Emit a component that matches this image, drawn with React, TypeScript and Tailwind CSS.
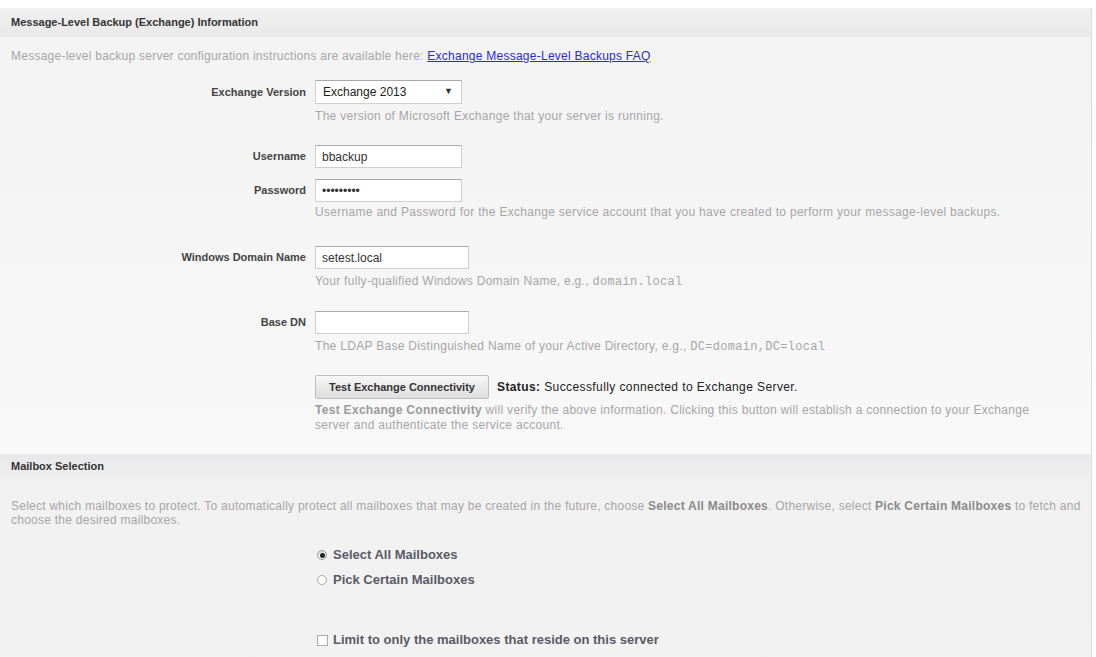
import React from "react";

const Label: React.FC<{ children: React.ReactNode }> = ({ children }) => (
  <div className="w-[315px] shrink-0 text-right font-bold text-[11px] text-[#444] pr-[9px]">
    {children}
  </div>
);

const Help: React.FC<{ children: React.ReactNode; className?: string }> = ({ children, className }) => (
  <div className={"ml-[315px] text-[12px] tracking-[0.3px] leading-[15px] text-[#a6a6a6] " + (className || "")}>
    {children}
  </div>
);

const TextInput: React.FC<{ value?: string; width: string }> = ({ value, width }) => (
  <div
    className={
      "h-[23px] bg-white border border-[#cfcfcf] border-t-[#aaa] flex items-center px-[6px] text-[12px] text-[#333] " +
      width
    }
  >
    {value}
  </div>
);

const mono = { fontFamily: '"Liberation Mono", "Courier New", monospace' };

const App: React.FC = () => {
  return (
    <div
      className="w-full h-[657px] bg-white pt-[8px] overflow-hidden"
      style={{ fontFamily: '"Liberation Sans", Arial, sans-serif' }}
    >
      <div className="mr-[4px] border-r border-[#dcdcdc] h-full bg-[#f4f4f4]">
        {/* section 1 header */}
        <div className="h-[29px] px-[11px] flex items-center bg-gradient-to-b from-[#f0f0f0] to-[#e9e9e9] font-bold text-[11px] text-[#333]">
          Message-Level Backup (Exchange) Information
        </div>

        <div className="bg-gradient-to-b from-[#f3f3f3] to-[#f8f8f8] pb-[21px]">
          <div className="px-[11px] pt-[12px] text-[12px] tracking-[0.25px] leading-[15px] text-[#a6a6a6]">
            Message-level backup server configuration instructions are available here:{" "}
            <span className="text-[#2a2ad0] underline">Exchange Message-Level Backups FAQ</span>
          </div>

          {/* exchange version */}
          <div className="flex items-center mt-[16px]">
            <Label>Exchange Version</Label>
            <div className="w-[147px] h-[24px] bg-white border border-[#cfcfcf] border-t-[#aaa] flex items-center justify-between pl-[7px] pr-[8px] text-[12px] text-[#222]">
              <span>Exchange 2013</span>
              <span className="text-[9px] text-[#333]">▼</span>
            </div>
          </div>
          <Help className="mt-[5px]">The version of Microsoft Exchange that your server is running.</Help>

          {/* username */}
          <div className="flex items-center mt-[21px]">
            <Label>Username</Label>
            <TextInput value="bbackup" width="w-[147px]" />
          </div>
          <div className="flex items-center mt-[11px]">
            <Label>Password</Label>
            <TextInput value="•••••••••" width="w-[147px]" />
          </div>
          <Help className="mt-[3px]">
            Username and Password for the Exchange service account that you have created to perform your message-level backups.
          </Help>

          {/* domain */}
          <div className="flex items-center mt-[26px]">
            <Label>Windows Domain Name</Label>
            <TextInput value="setest.local" width="w-[154px]" />
          </div>
          <Help className="mt-[5px]">
            Your fully-qualified Windows Domain Name, e.g., <span style={mono}>domain.local</span>
          </Help>

          {/* base dn */}
          <div className="flex items-center mt-[21px]">
            <Label>Base DN</Label>
            <TextInput width="w-[154px]" />
          </div>
          <Help className="mt-[5px]">
            The LDAP Base Distinguished Name of your Active Directory, e.g., <span style={mono}>DC=domain,DC=local</span>
          </Help>

          {/* test */}
          <div className="flex items-center mt-[20px] ml-[315px] gap-[8px]">
            <button className="h-[24px] w-[174px] rounded-[2px] border border-[#bdbdbd] bg-gradient-to-b from-[#f7f7f7] to-[#dedede] font-bold text-[11px] text-[#333]">
              Test Exchange Connectivity
            </button>
            <span className="text-[12px] tracking-[0.4px] text-[#222]">
              <b>Status:</b> Successfully connected to Exchange Server.
            </span>
          </div>
          <Help className="mt-[4px] w-[735px]">
            <span className="font-bold text-[#9a9a9a]">Test Exchange Connectivity</span> will verify the above information. Clicking this button will establish a connection to your Exchange server and authenticate the service account.
          </Help>
        </div>

        {/* section 2 header */}
        <div className="h-[24px] px-[11px] flex items-center bg-gradient-to-b from-[#e8e8ea] to-[#eeeeee] font-bold text-[11px] text-[#333]">
          Mailbox Selection
        </div>
        <div className="bg-gradient-to-b from-[#f1f1f1] to-[#f5f5f5] h-full">
          <div className="pl-[11px] pt-[21px] pr-[2px] text-[12px] tracking-[0.25px] leading-[14px] text-[#a6a6a6]">
            Select which mailboxes to protect. To automatically protect all mailboxes that may be created in the future, choose{" "}
            <b className="text-[#8a8a8a]">Select All Mailboxes</b>. Otherwise, select{" "}
            <b className="text-[#8a8a8a]">Pick Certain Mailboxes</b> to fetch and choose the desired mailboxes.
          </div>

          <div className="ml-[317px] mt-[20px] flex flex-col gap-[9px]">
            <div className="h-[16px] flex items-center gap-[6px] text-[13px] font-bold text-[#5a5a66]">
              <span className="w-[10px] h-[10px] rounded-full border border-[#999] bg-gradient-to-b from-[#ddd] to-white flex items-center justify-center">
                <span className="w-[5px] h-[5px] rounded-full bg-[#222]" />
              </span>
              Select All Mailboxes
            </div>
            <div className="h-[16px] flex items-center gap-[6px] text-[13px] font-bold text-[#5a5a66]">
              <span className="w-[10px] h-[10px] rounded-full border border-[#aaa] bg-white" />
              Pick Certain Mailboxes
            </div>
          </div>

          <div className="ml-[317px] mt-[44px] h-[16px] flex items-center gap-[5px] text-[13px] font-bold text-[#5a5a66]">
            <span className="w-[11px] h-[11px] border border-[#aaa] bg-white" />
            Limit to only the mailboxes that reside on this server
          </div>
        </div>
      </div>
    </div>
  );
};

export default App;
